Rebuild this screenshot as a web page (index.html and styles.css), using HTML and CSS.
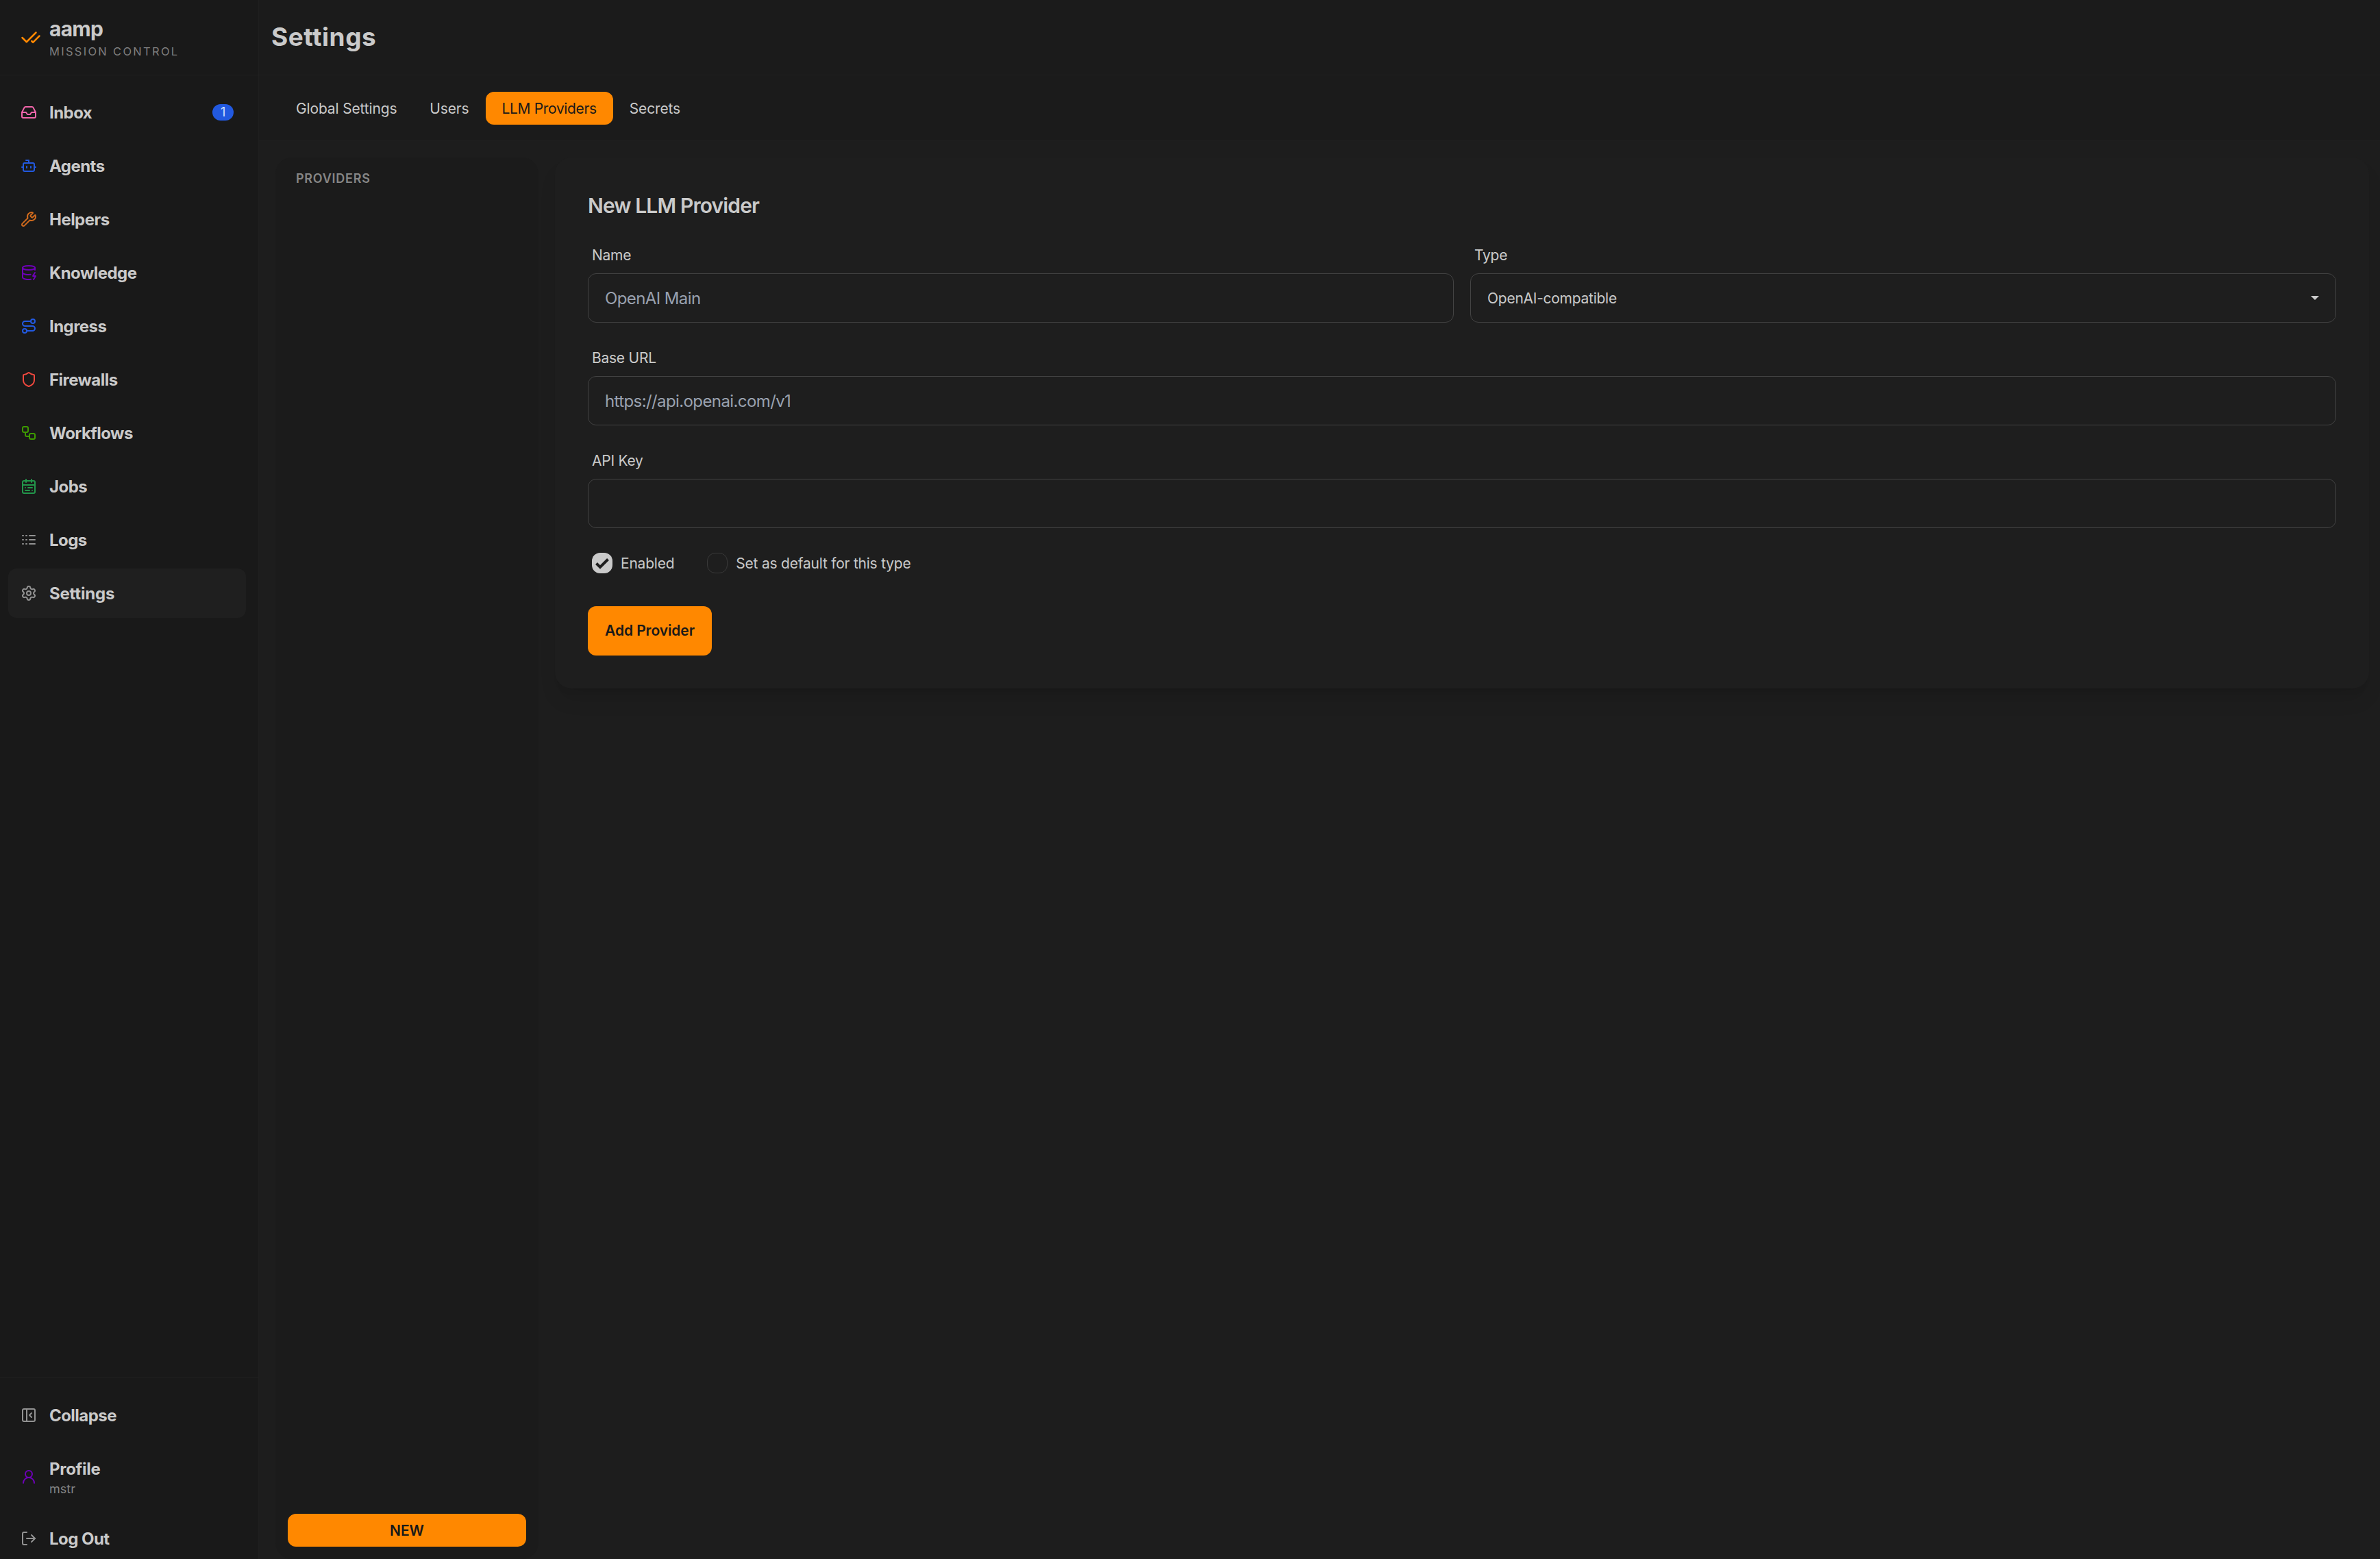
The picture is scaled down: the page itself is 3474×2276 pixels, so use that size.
FILE: index.html
```html
<!DOCTYPE html>
<html lang="en">
  <head>
    <meta charset="UTF-8" />
    <title>Settings - aamp</title>
    <link rel="stylesheet" href="styles.css">
  </head>
  <body>
    <div class="app">
      <aside class="sidebar">
        <div class="brand">
          <svg class="brand-logo" viewBox="0 0 24 24"><path d="M18 6 7 17l-5-5"/><path d="m22 10-7.5 7.5L13 16"/></svg>
          <div>
            <div class="brand-name">aamp</div>
            <div class="brand-sub">MISSION CONTROL</div>
          </div>
        </div>

        <nav class="nav">
          <a class="nav-item">
            <svg class="icon pink" viewBox="0 0 24 24"><polyline points="22 12 16 12 14 15 10 15 8 12 2 12"/><path d="M5.45 5.11 2 12v6a2 2 0 0 0 2 2h16a2 2 0 0 0 2-2v-6l-3.45-6.89A2 2 0 0 0 16.76 4H7.24a2 2 0 0 0-1.79 1.11z"/></svg>
            <span class="nav-text">Inbox</span>
            <span class="badge">1</span>
          </a>
          <a class="nav-item">
            <svg class="icon blue" viewBox="0 0 24 24"><path d="M12 8V4H8"/><rect width="16" height="12" x="4" y="8" rx="2"/><path d="M2 14h2"/><path d="M20 14h2"/><path d="M15 13v2"/><path d="M9 13v2"/></svg>
            <span class="nav-text">Agents</span>
          </a>
          <a class="nav-item">
            <svg class="icon orange" viewBox="0 0 24 24"><path d="M14.7 6.3a1 1 0 0 0 0 1.4l1.6 1.6a1 1 0 0 0 1.4 0l3.106-3.105c.32-.322.863-.22.983.218a6 6 0 0 1-8.259 7.057l-7.91 7.91a1 1 0 0 1-2.999-3l7.91-7.91a6 6 0 0 1 7.057-8.259c.438.12.54.662.219.984z"/></svg>
            <span class="nav-text">Helpers</span>
          </a>
          <a class="nav-item">
            <svg class="icon purple" viewBox="0 0 24 24"><ellipse cx="12" cy="5" rx="9" ry="3"/><path d="M3 5V19A9 3 0 0 0 15 21.84"/><path d="M21 5V8"/><path d="M21 12L18 17H22L19 22"/><path d="M3 12A9 3 0 0 0 14.59 14.87"/></svg>
            <span class="nav-text">Knowledge</span>
          </a>
          <a class="nav-item">
            <svg class="icon blue" viewBox="0 0 24 24"><circle cx="6" cy="19" r="3"/><path d="M9 19h8.5a3.5 3.5 0 0 0 0-7h-11a3.5 3.5 0 0 1 0-7H15"/><circle cx="18" cy="5" r="3"/></svg>
            <span class="nav-text">Ingress</span>
          </a>
          <a class="nav-item">
            <svg class="icon red" viewBox="0 0 24 24"><path d="M20 13c0 5-3.5 7.5-7.66 8.95a1 1 0 0 1-.67-.01C7.5 20.5 4 18 4 13V6a1 1 0 0 1 1-1c2 0 4.5-1.2 6.24-2.72a1.17 1.17 0 0 1 1.52 0C14.51 3.81 17 5 19 5a1 1 0 0 1 1 1z"/></svg>
            <span class="nav-text">Firewalls</span>
          </a>
          <a class="nav-item">
            <svg class="icon lime" viewBox="0 0 24 24"><rect width="8" height="8" x="3" y="3" rx="2"/><path d="M7 11v4a2 2 0 0 0 2 2h4"/><rect width="8" height="8" x="13" y="13" rx="2"/></svg>
            <span class="nav-text">Workflows</span>
          </a>
          <a class="nav-item">
            <svg class="icon green" viewBox="0 0 24 24"><rect width="18" height="18" x="3" y="4" rx="2"/><path d="M16 2v4"/><path d="M3 10h18"/><path d="M8 2v4"/><path d="M17 14h-6"/><path d="M13 18H7"/><path d="M7 14h.01"/><path d="M17 18h.01"/></svg>
            <span class="nav-text">Jobs</span>
          </a>
          <a class="nav-item">
            <svg class="icon" viewBox="0 0 24 24"><path d="M3 6h1"/><path d="M3 12h1"/><path d="M3 18h1"/><path d="M8 6h1"/><path d="M8 12h1"/><path d="M8 18h1"/><path d="M13 6h8"/><path d="M13 12h8"/><path d="M13 18h8"/></svg>
            <span class="nav-text">Logs</span>
          </a>
          <a class="nav-item active">
            <svg class="icon" viewBox="0 0 24 24"><path d="M9.671 4.136a2.34 2.34 0 0 1 4.659 0 2.34 2.34 0 0 0 3.319 1.915 2.34 2.34 0 0 1 2.33 4.033 2.34 2.34 0 0 0 0 3.831 2.34 2.34 0 0 1-2.33 4.033 2.34 2.34 0 0 0-3.319 1.915 2.34 2.34 0 0 1-4.659 0 2.34 2.34 0 0 0-3.32-1.915 2.34 2.34 0 0 1-2.33-4.033 2.34 2.34 0 0 0 0-3.831A2.34 2.34 0 0 1 6.35 6.051a2.34 2.34 0 0 0 3.319-1.915"/><circle cx="12" cy="12" r="3"/></svg>
            <span class="nav-text">Settings</span>
          </a>
        </nav>

        <div class="nav nav-bottom">
          <a class="nav-item">
            <svg class="icon" viewBox="0 0 24 24"><rect width="18" height="18" x="3" y="3" rx="2"/><path d="M9 3v18"/><path d="m16 15-3-3 3-3"/></svg>
            <span class="nav-text">Collapse</span>
          </a>
          <a class="nav-item profile">
            <svg class="icon purple" viewBox="0 0 24 24"><circle cx="12" cy="8" r="5"/><path d="M20 21a8 8 0 0 0-16 0"/></svg>
            <div>
              <div class="profile-title">Profile</div>
              <div class="profile-user">mstr</div>
            </div>
          </a>
          <a class="nav-item">
            <svg class="icon" viewBox="0 0 24 24"><path d="m16 17 5-5-5-5"/><path d="M21 12H9"/><path d="M9 21H5a2 2 0 0 1-2-2V5a2 2 0 0 1 2-2h4"/></svg>
            <span class="nav-text">Log Out</span>
          </a>
        </div>
      </aside>

      <main class="main">
        <header class="page-header">
          <h1>Settings</h1>
        </header>

        <div class="tabs">
          <a class="tab">Global Settings</a>
          <a class="tab">Users</a>
          <a class="tab tab-active">LLM Providers</a>
          <a class="tab">Secrets</a>
        </div>

        <div class="content">
          <section class="providers">
            <div class="providers-title">PROVIDERS</div>
            <button class="btn btn-new">NEW</button>
          </section>

          <form class="card">
            <h2>New LLM Provider</h2>
            <div class="row">
              <div class="field">
                <label class="label" for="name">Name</label>
                <input class="input" id="name" type="text" placeholder="OpenAI Main" />
              </div>
              <div class="field">
                <label class="label">Type</label>
                <div class="input select">
                  <span>OpenAI-compatible</span>
                  <svg class="caret" viewBox="0 0 12 6"><path d="M0 0h12L6 6z"/></svg>
                </div>
              </div>
            </div>
            <div class="field">
              <label class="label" for="url">Base URL</label>
              <input class="input" id="url" type="text" placeholder="https://api.openai.com/v1" />
            </div>
            <div class="field">
              <label class="label" for="key">API Key</label>
              <input class="input" id="key" type="password" />
            </div>
            <div class="checks">
              <label class="check">
                <span class="checkbox checked">
                  <svg viewBox="0 0 30 30"><path d="M6.5 15.5 12 21 23.5 9.5"/></svg>
                </span>
                <span class="check-text">Enabled</span>
              </label>
              <label class="check">
                <span class="checkbox"></span>
                <span class="check-text">Set as default for this type</span>
              </label>
            </div>
            <button class="btn btn-add" type="button">Add Provider</button>
          </form>
        </div>
      </main>
    </div>
  </body>
</html>
```
FILE: styles.css
```css
* {
  box-sizing: border-box;
}

body {
  margin: 0;
  height: 100vh;
  overflow: hidden;
  background-color: #1d1d1d;
  color: #cacaca;
  font-family: Inter, "Liberation Sans", sans-serif;
  font-size: 24px;
  line-height: 1.5;
}

h1,
h2 {
  margin: 0;
}

.app {
  display: flex;
  height: 100vh;
}

/* Sidebar */
.sidebar {
  display: flex;
  flex-direction: column;
  flex: none;
  width: 378px;
  background-color: #191919;
  border-right: 1px solid #1f1f1f;
}

.brand {
  display: flex;
  align-items: center;
  gap: 12px;
  flex: none;
  height: 110px;
  padding: 0 30px;
  border-bottom: 1px solid #1f1f1f;
}

.brand-logo {
  width: 30px;
  height: 30px;
  fill: none;
  stroke: #ff8800;
  stroke-width: 2;
  stroke-linecap: round;
  stroke-linejoin: round;
}

.brand-name {
  font-size: 30px;
  font-weight: 700;
  line-height: 38px;
  letter-spacing: -0.75px;
}

.brand-sub {
  margin-top: 3px;
  color: #7f7f7f;
  font-size: 16.5px;
  line-height: 22px;
  letter-spacing: 2.3px;
}

.nav {
  display: flex;
  flex-direction: column;
  gap: 6px;
  padding: 18px 18px 18px 12px;
}

.nav-bottom {
  flex: none;
  height: 265px;
  margin-top: auto;
  border-top: 1px solid #1f1f1f;
}

.nav-item {
  display: flex;
  align-items: center;
  gap: 18px;
  flex: none;
  height: 72px;
  padding: 0 18px;
  border-radius: 12px;
  font-weight: 650;
  letter-spacing: -0.55px;
}

.nav-text {
  padding-top: 2px;
}

.nav-item.active {
  background-color: #1f1f1f;
  letter-spacing: -0.2px;
}

.nav-item.profile {
  height: 96px;
  letter-spacing: -0.3px;
}

.profile-title {
  padding-top: 1px;
  line-height: 35px;
}

.profile-user {
  color: #848484;
  font-size: 18px;
  font-weight: 400;
  line-height: 24px;
  letter-spacing: 0;
}

.badge {
  width: 31px;
  height: 24px;
  margin-left: auto;
  border-radius: 12px;
  background-color: #2259e0;
  color: #d6e4ff;
  font-size: 18px;
  font-weight: 400;
  line-height: 24px;
  text-align: center;
}

.icon {
  width: 24px;
  height: 24px;
  flex: none;
  fill: none;
  stroke: #929292;
  stroke-width: 2;
  stroke-linecap: round;
  stroke-linejoin: round;
}

.pink {
  stroke: #f266ab;
}

.blue {
  stroke: #2259e0;
}

.orange {
  stroke: #cf6a1d;
}

.purple {
  stroke: #6e00b8;
}

.red {
  stroke: #f0483e;
}

.lime {
  stroke: #3d9a00;
}

.green {
  stroke: #22964a;
}

/* Main area */
.main {
  display: flex;
  flex-direction: column;
  flex: 1;
  min-width: 0;
}

.page-header {
  display: flex;
  align-items: center;
  flex: none;
  height: 110px;
  padding: 0 18px 2px;
  background-color: #1b1b1b;
  border-bottom: 1px solid #1f1f1f;
}

.page-header h1 {
  font-size: 37px;
  font-weight: 700;
  line-height: 48px;
  letter-spacing: 0.5px;
}

.tabs {
  display: flex;
  flex: none;
  height: 96px;
  padding: 24px 30px;
  background-color: #1b1b1b;
  border-bottom: 1px solid #1f1f1f;
}

.tab {
  height: 48px;
  padding: 0 24px;
  border-radius: 12px;
  font-size: 21px;
  line-height: 50px;
  letter-spacing: -0.15px;
}

.tab-active {
  background-color: #ff8800;
  color: #191919;
  letter-spacing: -0.35px;
}

.content {
  display: flex;
  align-items: flex-start;
  gap: 24px;
  flex: 1;
  padding: 24px 16px 0 24px;
}

.providers {
  display: flex;
  flex-direction: column;
  justify-content: space-between;
  flex: none;
  align-self: stretch;
  width: 384px;
  padding: 18px;
  border-radius: 24px;
  background-color: #1b1b1b;
}

.providers-title {
  padding: 0 12px;
  color: #868686;
  font-size: 18px;
  font-weight: 600;
  line-height: 26px;
  letter-spacing: 0.75px;
}

.btn {
  border: none;
  border-radius: 12px;
  background-color: #ff8800;
  color: #191919;
  font-family: inherit;
  font-size: 21px;
  font-weight: 600;
  cursor: pointer;
}

.btn-new {
  height: 48px;
}

.card {
  display: flex;
  flex-direction: column;
  align-items: stretch;
  flex: 1;
  padding: 48px;
  border-radius: 24px;
  background-color: #1e1e1e;
  box-shadow: 0 20px 30px -6px rgba(0, 0, 0, 0.1), 0 8px 12px -8px rgba(0, 0, 0, 0.1);
}

.card h2 {
  margin-bottom: 33px;
  font-size: 30px;
  font-weight: 600;
  line-height: 45px;
  letter-spacing: -0.88px;
}

.row {
  display: grid;
  grid-template-columns: 1fr 1fr;
  gap: 24px;
}

.field {
  display: flex;
  flex-direction: column;
  margin-bottom: 35px;
}

.label {
  margin-bottom: 10px;
  padding-left: 6px;
  font-size: 21px;
  line-height: 33px;
  letter-spacing: -0.25px;
}

.input {
  width: 100%;
  height: 72px;
  padding: 0 24px;
  border: 1px solid #434343;
  border-radius: 12px;
  background-color: #1e1e1e;
  color: #cacaca;
  font-family: inherit;
  font-size: 24px;
  letter-spacing: -0.6px;
}

.input::placeholder {
  color: #99a1af;
  opacity: 1;
}

.select {
  display: flex;
  align-items: center;
  justify-content: space-between;
  font-size: 21px;
  letter-spacing: -0.26px;
}

.select span {
  padding-top: 2px;
}

.caret {
  width: 12px;
  height: 6px;
  fill: #cacaca;
}

.checks {
  display: flex;
  gap: 48px;
  margin: 1px 0 48px;
  padding-left: 6px;
}

.check {
  display: flex;
  align-items: center;
  gap: 12px;
  height: 30px;
  font-size: 21px;
  letter-spacing: -0.22px;
}

.check-text {
  padding-top: 2px;
}

.checkbox {
  width: 30px;
  height: 30px;
  border: 1px solid #3a3a3a;
  border-radius: 12px;
}

.checkbox.checked {
  border: none;
  background-color: #cacaca;
}

.checkbox svg {
  display: block;
  fill: none;
  stroke: #1f1f1f;
  stroke-width: 4;
}

.btn-add {
  align-self: flex-start;
  width: 181px;
  height: 72px;
  padding: 0 0 2px;
  letter-spacing: -0.1px;
}
```
